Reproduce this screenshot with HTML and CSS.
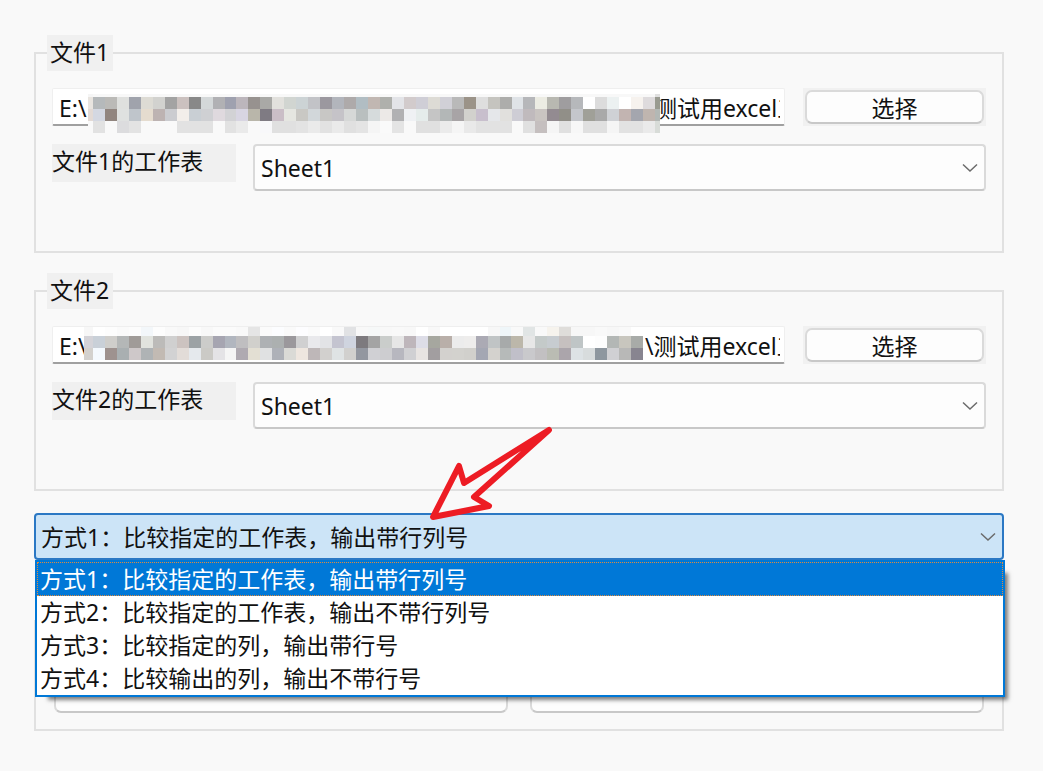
FILE: index.html
```html
<!DOCTYPE html>
<html lang="zh-CN">
<head>
<meta charset="utf-8">
<title>文件比较</title>
<link rel="stylesheet" href="styles.css">
</head>
<body>
<main class="form">
  <fieldset class="group">
    <legend class="legend">文件1</legend>
    <div class="path-row">
      <div class="path">
        <input class="path-input" id="path1" type="text" value="E:\" aria-label="文件1">
        <span class="path-end">测试用excel工</span>
        <svg class="mosaic mosaic-first" id="mosaic1" preserveAspectRatio="none" aria-hidden="true"></svg>
      </div>
      <button class="pick" type="button"><span class="pick-face">选择</span></button>
    </div>
    <div class="sheet-row">
      <label class="sheet-label" for="sheet1">文件1的工作表</label>
      <div class="combo">
        <select class="select" id="sheet1"><option>Sheet1</option></select>
        <svg class="chevron" viewBox="0 0 16 10" aria-hidden="true"><path d="M1 1.500L8 8L15 1.500"/></svg>
      </div>
    </div>
  </fieldset>

  <fieldset class="group">
    <legend class="legend">文件2</legend>
    <div class="path-row">
      <div class="path">
        <input class="path-input" id="path2" type="text" value="E:\" aria-label="文件2">
        <span class="path-end path-end-wide">\测试用excel工</span>
        <svg class="mosaic mosaic-second" id="mosaic2" preserveAspectRatio="none" aria-hidden="true"></svg>
      </div>
      <button class="pick" type="button"><span class="pick-face">选择</span></button>
    </div>
    <div class="sheet-row">
      <label class="sheet-label" for="sheet2">文件2的工作表</label>
      <div class="combo">
        <select class="select" id="sheet2"><option>Sheet1</option></select>
        <svg class="chevron" viewBox="0 0 16 10" aria-hidden="true"><path d="M1 1.500L8 8L15 1.500"/></svg>
      </div>
    </div>
  </fieldset>

  <div class="combo mode">
    <select class="select select-open" aria-label="方式">
      <option>方式1：比较指定的工作表，输出带行列号</option>
    </select>
    <svg class="chevron" viewBox="0 0 16 10" aria-hidden="true"><path d="M1 1.500L8 8L15 1.500"/></svg>
    <ul class="menu" role="listbox">
      <li class="item item-active" role="option" aria-selected="true">方式1：比较指定的工作表，输出带行列号</li>
      <li class="item" role="option">方式2：比较指定的工作表，输出不带行列号</li>
      <li class="item" role="option">方式3：比较指定的列，输出带行号</li>
      <li class="item" role="option">方式4：比较输出的列，输出不带行号</li>
    </ul>
    <svg class="arrow" viewBox="0 0 130 100" aria-hidden="true"><path d="M7 93L33 42L38 59L123 6L48 73L63 82Z"/></svg>
  </div>

  <section class="actions">
    <button class="action" type="button"></button>
    <button class="action" type="button"></button>
  </section>
</main>
<script src="mosaic.js"></script>
</body>
</html>
```
FILE: styles.css
```css
* { box-sizing: border-box; }

body {
  margin: 0;
  background: #f9f9f9;
  color: #111;
  font: 23px/32px "Noto Sans", "Noto Sans CJK SC", sans-serif;
}

button, input, select { font: inherit; color: inherit; }

.form {
  display: flex;
  flex-direction: column;
  padding: 35px 39px 40px 34px;
}

.group {
  min-width: 0;
  margin: 0 0 20px;
  padding: 17px 16px 60px;
  border: 2px solid #e1e1e1;
}

.legend {
  height: 36px;
  margin-left: -5px;
  padding: 0 4px 0 3px;
  background: #f0f0f0;
  line-height: 34px;
}

.path-row { display: flex; gap: 18px; }

.path {
  position: relative;
  display: flex;
  flex: 1;
  min-width: 0;
  height: 38px;
  padding-right: 4px;
  background: #fff;
  border: 1px solid #efefef;
  border-bottom: 2px solid #a0a0a0;
  border-radius: 2px;
}

.path-input {
  flex: 1;
  min-width: 0;
  padding: 3px 0 0 6px;
  border: 0;
  outline: 0;
  background: none;
}

.path-end {
  flex: none;
  width: 126px;
  height: 35px;
  padding-top: 3px;
  overflow: hidden;
  white-space: nowrap;
}

.path-end-wide { width: 135px; }

.mosaic { position: absolute; shape-rendering: crispEdges; }

.mosaic-first {
  top: 5px;
  left: 35px;
  width: calc(100% - 159px);
  height: 39px;
}

.mosaic-second {
  top: 0;
  left: 31px;
  width: calc(100% - 172px);
  height: 33px;
}

.pick {
  display: flex;
  flex: none;
  width: 183px;
  height: 38px;
  padding: 2px;
  border: 0;
  background: #f1f1f1;
}

.pick-face {
  flex: 1;
  border: 2px solid #dadada;
  border-bottom-color: #c8c8c8;
  border-radius: 7px;
  background: #fdfdfd;
  line-height: 32px;
}

.sheet-row {
  display: flex;
  align-items: flex-start;
  gap: 17px;
  margin-top: 18px;
}

.sheet-label {
  flex: none;
  width: 184px;
  height: 38px;
  background: #f0f0f0;
  line-height: 34px;
}

.combo { position: relative; flex: 1; }

.select {
  display: block;
  width: 100%;
  height: 47px;
  padding: 0 6px;
  appearance: none;
  outline: 0;
  border: 2px solid #dadada;
  border-bottom-color: #c8c8c8;
  border-radius: 4px;
  background: #fdfdfd;
}

.chevron {
  position: absolute;
  top: 19px;
  right: 8px;
  width: 16px;
  height: 10px;
  fill: none;
  stroke: #6b6b6b;
  stroke-width: 1.500;
  pointer-events: none;
}

.mode { flex: none; margin-top: 2px; z-index: 1; }

.select-open {
  padding: 0 5px;
  border-color: #2b78c4;
  background: #cce4f7;
}

.menu {
  position: absolute;
  top: 47px;
  left: 1px;
  width: 100%;
  margin: 0;
  padding: 0;
  border: 2px solid #0078d7;
  background: #fff;
  box-shadow: 8px 8px 4px -5px rgba(0, 0, 0, .5);
  list-style: none;
}

.item { height: 33px; padding-left: 3px; line-height: 33px; }

.item-active {
  height: 34px;
  padding-left: 2px;
  border: 1px dotted #e08a3c;
  background: #0078d7;
  color: #fff;
}

.arrow {
  position: absolute;
  top: -89px;
  left: 392px;
  width: 130px;
  height: 100px;
  fill: none;
  stroke: #ed1c24;
  stroke-width: 6;
  stroke-linejoin: round;
  pointer-events: none;
}

.actions {
  display: flex;
  gap: 22px;
  margin-top: 60px;
  padding: 54px 18px 16px;
  border: 2px solid #e1e1e1;
}

.action {
  flex: 1;
  height: 37px;
  border: 2px solid #dadada;
  border-bottom-color: #c8c8c8;
  border-radius: 7px;
  background: #fdfdfd;
}
```
FILE: mosaic.js
```js
// Each row: height, left edge colour, cell colours, right edge colour.
// "-" is the form background.
const mosaics = {
  mosaic1: {
    left: 5, right: 5, width: 572,
    rows: [
      [3, "f5f5f5", Array(47).fill("f8f8f8").join(" "), "e0e0e0"],
      [12, "e8e4df", "b5b9bb bbbab7 dfe0de a0a3ac dddbd4 d2d2cf a3a3a3 cbc1bf 888888 d4d8d9 b1b1b4 9fa1af bcb6bc 97928f a9a9a6 e2e1dd d1d5d1 ccd3d5 c2c3c7 9b989f b2b5bc aeaaaa b1bdc3 c1b7b2 afb0ac e3e4e8 d2cbcc cfced6 dddbd5 d1d0d7 b9b9b9 9b9388 dedede c5c4bf adadab dfe3e7 b6b7ba ecece3 b8b8b1 9f9d9f b6b8bb ffffff dcdcdc ecf1f1 ffffff f6f2ee dedbdd", "999b91"],
      [12, "e3dad5", "d4d8e2 91857f dfe1e0 bfc5cb e5dccf bdb3b2 cbccd0 f2eeea c9cfd4 cfd0d3 dfd9de d2d2d5 d8d5e2 b9b6aa 7f7b83 cabec7 e5e6e1 c9c8c4 d2d7da c8c7c5 c5c3c8 d6d8d7 b9bfbf d6dbdc ece9e7 b1b1b3 eff1f4 e5eceb c5c5c5 b3b7b7 a8a4a6 d2d1cd c8bfcd e5e7ea e1e0dd cecdd5 c0babd c9c4c1 938b91 918f88 c4c6cb a0a098 a9a9a9 cfd1d5 c2b4b1 a4a6ae bfb5af", "b3b8b5"],
      [12, "-", "e2e2e2 - dcdcde e3e3e3 - - - e2e2e2 e2e2e2 e2e2e2 - e2e2e2 eaeaea - f8f8fa e0e0e0 e0e0e0 e3e3e3 eaeaea e2e2e2 eaeaea e0e0e0 e4e4e4 f5f5f5 fafafa e4e4e4 - e0e0e0 e0e0e0 ebebeb f5f5f5 e9e9e9 e2e2e2 e2e2e2 e2e2e2 - e0e0e0 c5bfbf f5f5f5 e0e0e0 f7f7f7 e0e0e0 e0e0e0 f5f5f5 e2e2e2 e2e2e2 eaeaea", "d8dcd8"]
    ]
  },
  mosaic2: {
    left: 9, right: 0, width: 559,
    rows: [
      [9, "f7f7f7", "ffffff fdfdfd fafafa fcfcfc f3f7fa fdfdfd f9f9f9 f7f7f7 fcfcfc f8f8f8 fbfbfb fbfbfb f9f9f9 e5e5e5 fbfbfb fcfdff fafafa fdfdff fbfbfb ffffff f9f9f9 e1e2e4 f8f8f8 f6f8f8 f8f8f8 f9f9f9 f8f8f8 ffffff f8f8f8 ffffff ffffff ffffff ffffff f7f7f7 eff6f9 f9f9f9 e1e5e5 f9f9f9 f6f3ed dfddda f7f7f7 f7f7f7 f9f9f9 f7f7f7 f9f9f9 ffffff", "-"],
      [12, "d4d3d8", "c9d0d8 cfcecb b4b7b7 a09b98 e1e3de bcbbb9 d0d0d0 ccc3c0 9ca2a5 ccccca a6a5b1 b1b6bf bfbec0 d1d0cc aeb1b4 acb0b0 9b989c d0d0d1 e9e9ec e2e3e6 c4c4d0 cfd4df 7d7a7e a4a4a4 cacdcb e6e6e6 beb6bb dddde7 a6a79f b9afa9 ececec eeedec abaab4 c0c4c5 a7aaaa bcb7aa e7e7e7 c4cac9 c7ccd0 c6c0bf bfc5c6 ffffff fdfdfd b3b7b5 c8c6be a8aba8", "-"],
      [12, "d3d1ce", "f4f9fe 9e928f a9afb1 cec8c9 afb3b5 c2bab3 d2d2d3 e2dcd8 e5e9ed cbcac6 e4e3e6 f5f5f5 afaab1 e3dfd3 e0e1e2 aeb1b8 dadad6 eee6df beb7b8 d2d0ce dfe3e4 d1d0ce 9397a0 d0d0d4 cdcdd0 b7b7bf d0d0d3 e8e4e2 a29ea0 d3d1ce d3d2ce d1d0cc a4a7b3 d4d2ce b6bab9 c0bfc9 c9c9cc c2c0c2 babcb3 aba5ab dde2e5 d8dcdd 8e979f d0d0d3 b8b8b7 888590", "-"]
    ]
  }
};

for (const [id, m] of Object.entries(mosaics)) {
  const svg = document.getElementById(id);
  let y = 0;
  const cell = (x, end, h, color) => {
    if (end <= x) return;
    const r = document.createElementNS("http://www.w3.org/2000/svg", "rect");
    r.setAttribute("x", x);
    r.setAttribute("y", y);
    r.setAttribute("width", end - x);
    r.setAttribute("height", h);
    r.setAttribute("fill", color === "-" ? "#f9f9f9" : "#" + color);
    svg.append(r);
  };
  for (const [h, first, cells, last] of m.rows) {
    const colors = cells.split(" ");
    const step = (m.width - m.left - m.right) / colors.length;
    cell(0, m.left, h, first);
    colors.forEach((c, i) => cell(Math.round(m.left + i * step), Math.round(m.left + (i + 1) * step), h, c));
    cell(m.width - m.right, m.width, h, last);
    y += h;
  }
  svg.setAttribute("viewBox", `0 0 ${m.width} ${y}`);
}
```
